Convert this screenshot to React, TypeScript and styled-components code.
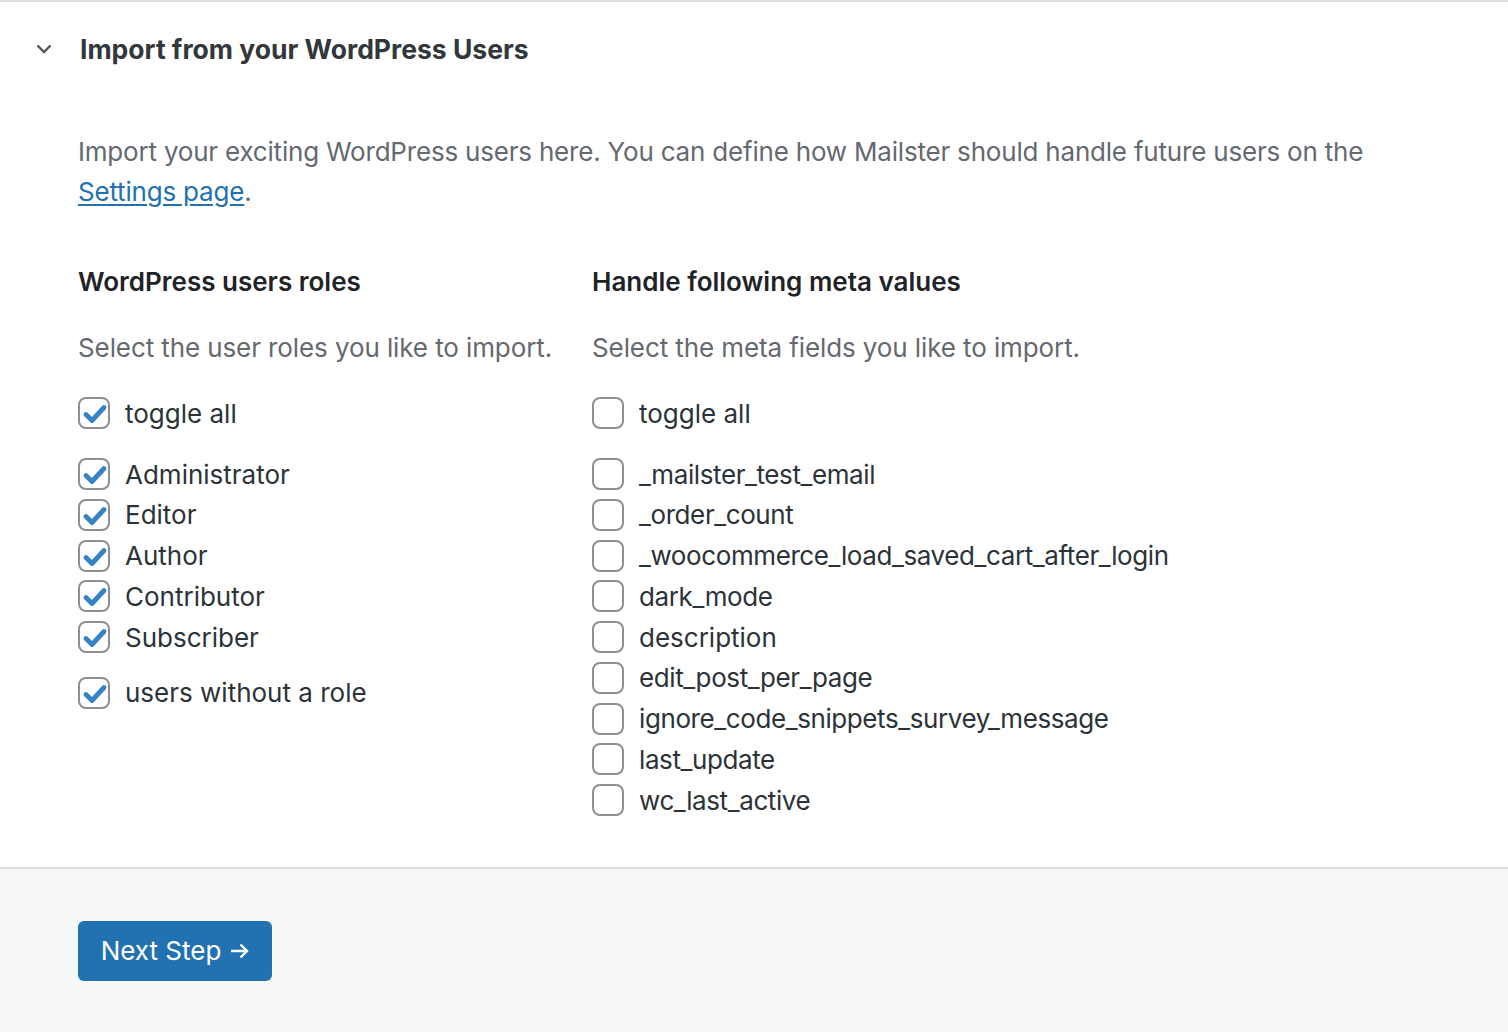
import React from "react";
import styled, { createGlobalStyle } from "styled-components";

const GlobalStyle = createGlobalStyle`
  html, body { margin: 0; padding: 0; background: #fff; }
  body { font-family: Inter, "Noto Sans", sans-serif; -webkit-font-smoothing: antialiased; }
`;

const Panel = styled.div`
  border-top: 2px solid #dcdcde;
  background: #fff;
`;

const Header = styled.div`
  height: 94px;
  display: flex;
  align-items: center;
  padding-left: 36px;
  gap: 28px;
`;

const Title = styled.h2`
  margin: 0;
  font-size: 26.5px;
  font-weight: 700;
  color: #32373c;
`;

const Content = styled.div`
  padding: 36px 78px 46px;
`;

const Intro = styled.p`
  margin: 0;
  font-size: 26px;
  line-height: 40px;
  color: #646970;
  letter-spacing: -0.2px;
`;

const Link = styled.a`
  color: #2271b1;
  text-decoration: underline;
  text-underline-offset: 3px;
`;

const Columns = styled.div`
  display: grid;
  grid-template-columns: 514px 1fr;
  margin-top: 50px;
`;

const Column = styled.div`
  display: flex;
  flex-direction: column;
`;

const ColTitle = styled.h3`
  margin: 0;
  font-size: 26px;
  line-height: 40px;
  font-weight: 600;
  color: #1d2327;
`;

const Desc = styled.p`
  margin: 26px 0 0;
  font-size: 26px;
  line-height: 40px;
  color: #646970;
  letter-spacing: -0.1px;
`;

const List = styled.div<{ $top: number }>`
  display: flex;
  flex-direction: column;
  margin-top: ${(p) => p.$top}px;
`;

const Row = styled.label<{ $gapTop?: number }>`
  display: flex;
  align-items: center;
  gap: 15px;
  height: 40.75px;
  font-size: 26px;
  color: #2c3338;
  margin-top: ${(p) => p.$gapTop ?? 0}px;
  cursor: pointer;
`;

const Label = styled.span<{ $tight?: boolean }>`
  letter-spacing: ${(p) => (p.$tight ? "-0.4px" : "0")};
`;

const Box = styled.span`
  width: 32px;
  height: 32px;
  box-sizing: border-box;
  border: 2px solid #8c8f94;
  border-radius: 8px;
  background: #fff;
  display: flex;
  align-items: center;
  justify-content: center;
  flex: none;
`;

const Footer = styled.div`
  border-top: 2px solid #dcdcde;
  background: #f6f7f7;
  padding: 52px 78px 51px;
`;

const Button = styled.button`
  height: 60px;
  width: 194px;
  border: none;
  border-radius: 6px;
  background: #2271b1;
  color: #fff;
  font-family: inherit;
  font-size: 26px;
  display: flex;
  align-items: center;
  justify-content: center;
  gap: 9px;
  padding: 0;
  cursor: pointer;
`;

const Check = () => (
  <svg width="28" height="28" viewBox="0 0 28 28">
    <path d="M6 15.5 L12 21.5 L24 8.5" fill="none" stroke="#3582c4" strokeWidth="4.8" strokeLinecap="round" strokeLinejoin="round" />
  </svg>
);

const Chevron = () => (
  <svg width="16" height="10" viewBox="0 0 16 10">
    <path d="M1.5 1.5 L8 8 L14.5 1.5" fill="none" stroke="#50575e" strokeWidth="2.4" />
  </svg>
);

const Arrow = () => (
  <svg width="19" height="16" viewBox="0 0 19 16">
    <path d="M1 8 H17 M10.5 1.5 L17 8 L10.5 14.5" fill="none" stroke="#fff" strokeWidth="2.4" />
  </svg>
);

const CheckRow = ({ label, checked, gapTop }: { label: string; checked: boolean; gapTop?: number }) => (
  <Row $gapTop={gapTop}>
    <Box>{checked && <Check />}</Box>
    <Label $tight={label.includes("_")}>{label}</Label>
  </Row>
);

const roles = ["Administrator", "Editor", "Author", "Contributor", "Subscriber"];
const metas = [
  "_mailster_test_email",
  "_order_count",
  "_woocommerce_load_saved_cart_after_login",
  "dark_mode",
  "description",
  "edit_post_per_page",
  "ignore_code_snippets_survey_message",
  "last_update",
  "wc_last_active",
];

export default function App() {
  return (
    <>
      <GlobalStyle />
      <Panel>
        <Header>
          <Chevron />
          <Title>Import from your WordPress Users</Title>
        </Header>
        <Content>
          <Intro>
            Import your exciting WordPress users here. You can define how Mailster should handle future users on the{" "}
            <Link href="#">Settings page</Link>.
          </Intro>
          <Columns>
            <Column>
              <ColTitle>WordPress users roles</ColTitle>
              <Desc>Select the user roles you like to import.</Desc>
              <List $top={25}>
                <CheckRow label="toggle all" checked />
              </List>
              <List $top={20}>
                {roles.map((r) => (
                  <CheckRow key={r} label={r} checked />
                ))}
                <CheckRow label="users without a role" checked gapTop={15} />
              </List>
            </Column>
            <Column>
              <ColTitle>Handle following meta values</ColTitle>
              <Desc>Select the meta fields you like to import.</Desc>
              <List $top={25}>
                <CheckRow label="toggle all" checked={false} />
              </List>
              <List $top={20}>
                {metas.map((m) => (
                  <CheckRow key={m} label={m} checked={false} />
                ))}
              </List>
            </Column>
          </Columns>
        </Content>
      </Panel>
      <Footer>
        <Button>
          Next Step <Arrow />
        </Button>
      </Footer>
    </>
  );
}
